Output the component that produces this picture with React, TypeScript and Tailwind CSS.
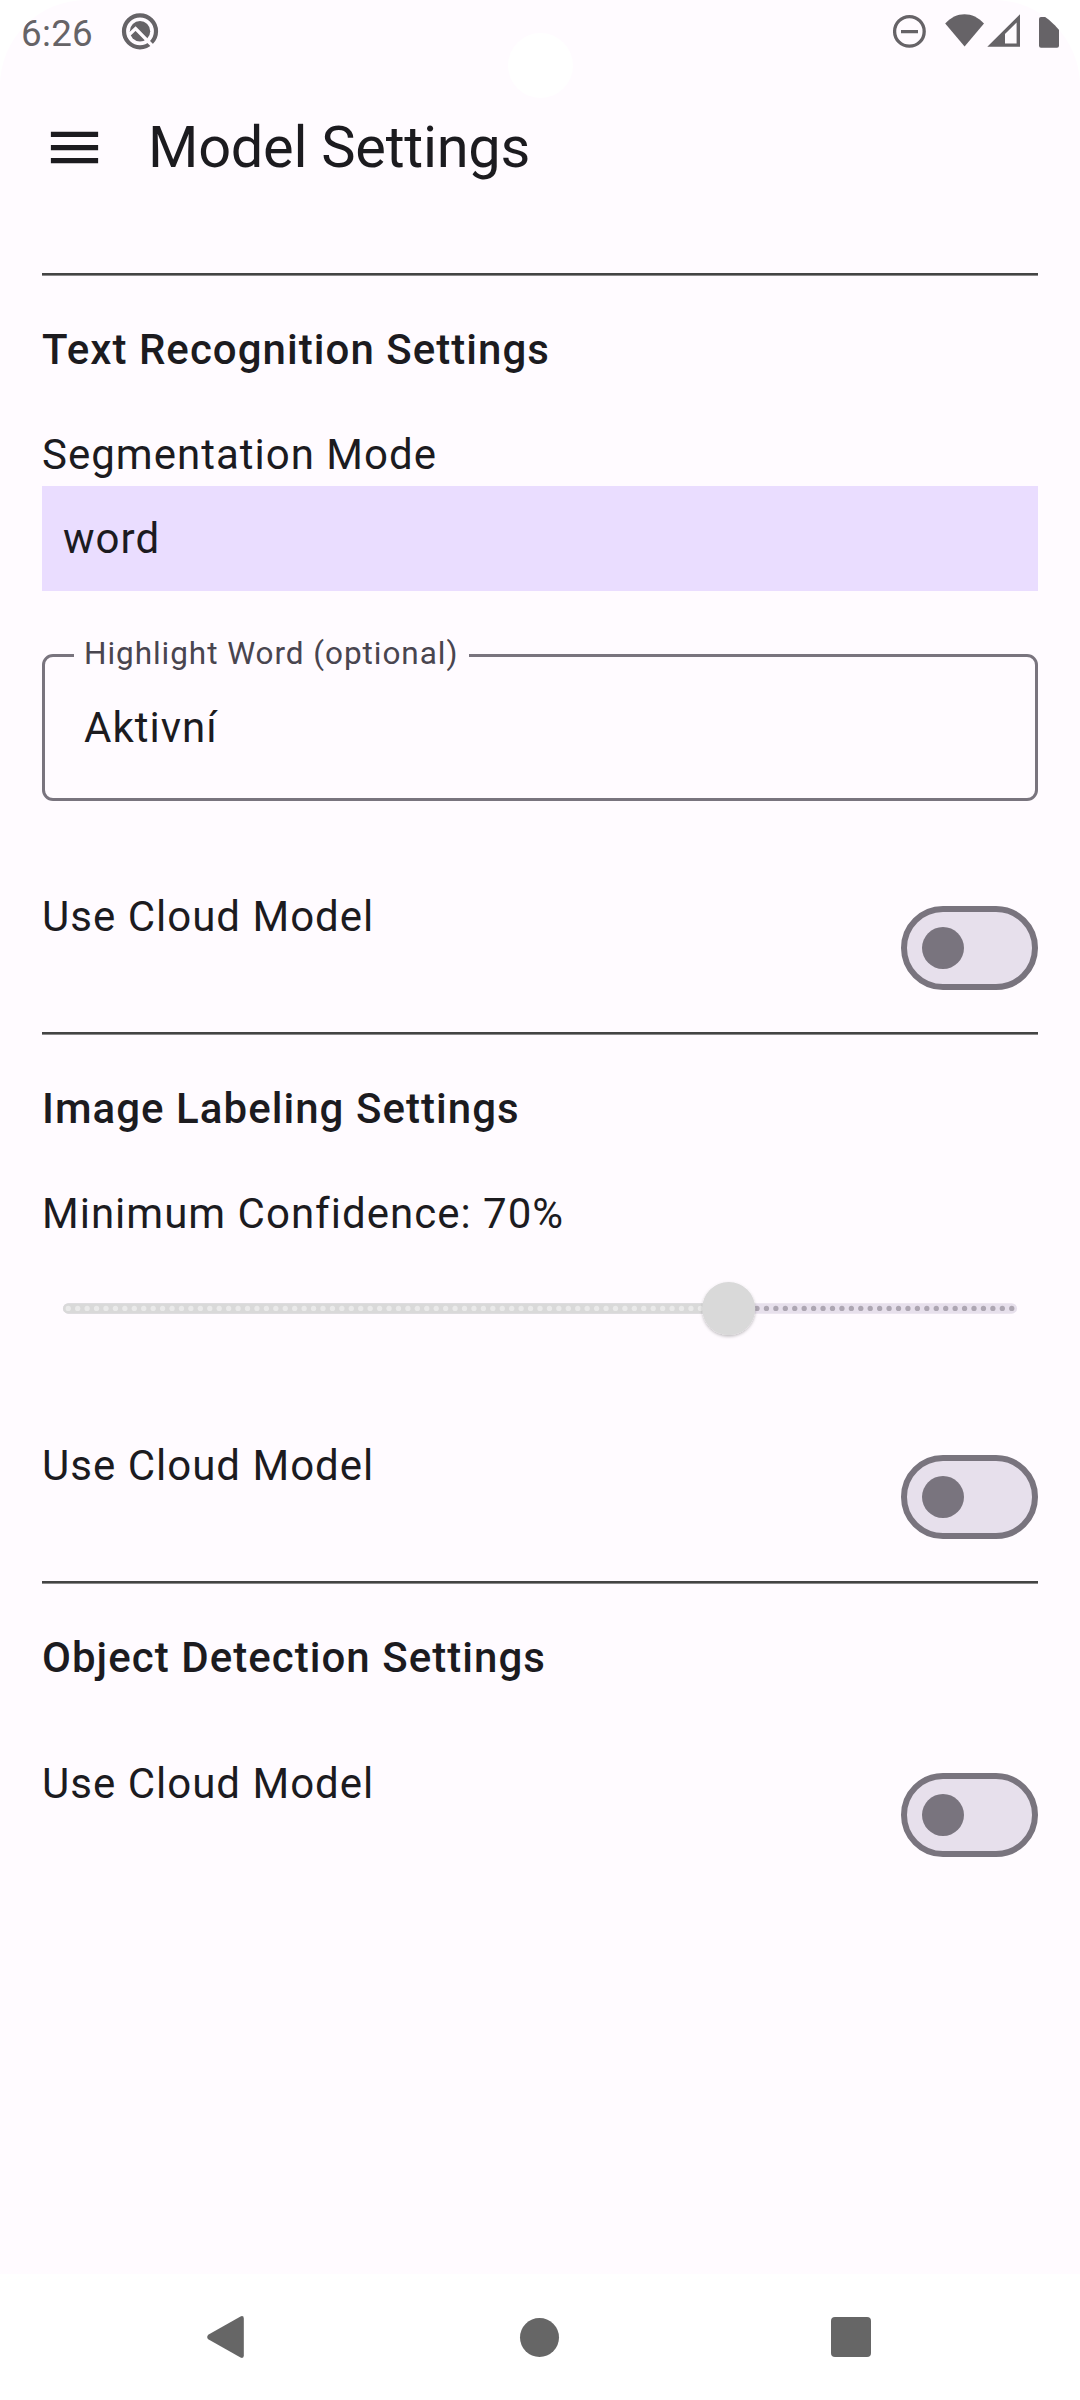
import React from "react";

function StatusBar() {
  return (
    <div className="relative flex h-[63px] shrink-0 items-start justify-between text-[#666367]">
      <div className="flex items-start pl-[21px]">
        <span className="mt-[12px] w-[100px] text-[36.75px] leading-[43px] tracking-[0.3px]">6:26</span>
        <svg className="mt-[12px] h-[39px] w-[39px]" viewBox="0 0 39 39" fill="none">
          <circle cx="19" cy="19.3" r="16" stroke="currentColor" strokeWidth="4.2" />
          <circle cx="19" cy="19.3" r="10.2" fill="currentColor" />
          <path d="M7 23.8L14.6 16.6L34 36.4" stroke="#fffbff" strokeWidth="3.4" />
        </svg>
      </div>
      <svg className="h-[63px] w-[200px]" viewBox="880 0 200 63" fill="none">
        <circle cx="909.4" cy="31.4" r="14.8" stroke="currentColor" strokeWidth="3.3" />
        <path d="M901 30h17v3.3h-17z" fill="currentColor" />
        <path d="M945.2 23.5C956 11 973 11 984 23.5L964.6 46.6Z" fill="currentColor" />
        <path fillRule="evenodd" d="M987.3 46.8L1020 14.3V46.8ZM1005 43.4H1016.6V22.5L1005 34Z" fill="currentColor" />
        <path d="M1041 17h16a2 2 0 0 1 2 2v26.7a2 2 0 0 1-2 2h-16a2 2 0 0 1-2-2V19a2 2 0 0 1 2-2z" fill="currentColor" />
      </svg>
      <div className="absolute left-[508px] top-[33px] h-[65px] w-[65px] rounded-full bg-white" />
    </div>
  );
}

function AppBar() {
  return (
    <header className="flex h-[168px] shrink-0 items-center pl-[43px]">
      <svg className="h-[63px] w-[63px]" viewBox="0 0 24 24" fill="currentColor">
        <path d="M3 18h18v-2H3v2zm0-5h18v-2H3v2zm0-7v2h18V6H3z" />
      </svg>
      <h1 className="ml-[42px] mt-[2px] text-[57.75px] leading-[73.5px] tracking-[-0.27px]">Model Settings</h1>
    </header>
  );
}

function Divider() {
  return <div className="h-[3px] border-b border-[#8a898a] bg-[#444444]" />;
}

function Heading({ children }: { children: React.ReactNode }) {
  return <h2 className="mt-[42px] font-medium tracking-[1.04px]">{children}</h2>;
}

function CloudSwitch() {
  return (
    <div className="mb-[42px] flex items-start justify-between">
      <span>Use Cloud Model</span>
      <button
        role="switch"
        aria-checked="false"
        aria-label="Use Cloud Model"
        className="mt-[21px] flex h-[84px] w-[137px] items-center rounded-full border-[6px] border-[#79747e] bg-[#e7e0ec] pl-[15px]"
      >
        <span className="h-[42px] w-[42px] rounded-full bg-[#79747e]" />
      </button>
    </div>
  );
}

const TICKS = Array.from({ length: 101 }, (_, i) => i);

function Slider({ value }: { value: number }) {
  const x = (n: number) => 26.25 + n * 9.435;
  return (
    <svg className="block h-[126px] w-full overflow-visible" viewBox="0 0 996 126">
      <defs>
        <filter id="thumbShadow" x="-30%" y="-30%" width="160%" height="160%">
          <feDropShadow dx="0" dy="1.6" stdDeviation="1.4" floodColor="#000000" floodOpacity="0.25" />
        </filter>
      </defs>
      <path d="M26.25 63.4H969.8" stroke="#e7e0ec" strokeWidth="10.5" strokeLinecap="round" />
      <path d={`M26.25 63.4H${x(value)}`} stroke="#d9d9d9" strokeWidth="10.5" strokeLinecap="round" />
      {TICKS.map((n) => (
        <circle key={n} cx={x(n)} cy="63.4" r="2.63" fill={n <= value ? "#eaeaea" : "#ada6b2"} />
      ))}
      <circle cx={x(value)} cy="63.6" r="26.5" fill="#d9d9d9" filter="url(#thumbShadow)" />
    </svg>
  );
}

function NavBar() {
  return (
    <nav className="flex h-[126px] shrink-0 items-center justify-between bg-white pl-[207px] pr-[209px] text-[#666666]">
      <svg className="h-[42px] w-[37px]" viewBox="0 0 37 42" fill="currentColor">
        <path d="M1.2 18.7L33.5.4Q36.8-.8 36.8 2.5V39.5Q36.8 42.8 33.5 41.6L1.2 23.3Q-.8 21 1.2 18.7Z" />
      </svg>
      <span className="ml-[4px] h-[39px] w-[39px] rounded-full bg-[#666666]" />
      <span className="h-[40px] w-[40px] rounded-[4px] bg-[#666666]" />
    </nav>
  );
}

export default function App() {
  return (
    <div className="h-[2400px] w-[1080px] overflow-hidden bg-white">
      <div className="flex h-full flex-col overflow-hidden rounded-t-[86px] bg-[#fffbff] font-['Roboto',sans-serif] text-[#1c1b1f]">
        <StatusBar />
        <AppBar />
        <main className="flex-1 px-[42px] pt-[42px] text-[42px] leading-[63px] tracking-[1.01px]">
          <Divider />
          <section>
            <Heading>Text Recognition Settings</Heading>
            <p className="mt-[42px]">Segmentation Mode</p>
            <div className="bg-[#eaddff] p-[21px]">word</div>
            <div className="relative mb-[84px] mt-[63px] h-[147px] rounded-[11px] border-[3px] border-[#79747e] pl-[39px] pt-[39px]">
              <label className="absolute left-[29px] top-[-24px] w-[395px] whitespace-nowrap bg-[#fffbff] pl-[10px] text-[31.5px] leading-[42px] tracking-[0.95px] text-[#49454f]">
                Highlight Word (optional)
              </label>
              Aktivní
            </div>
            <CloudSwitch />
          </section>
          <Divider />
          <section>
            <Heading>Image Labeling Settings</Heading>
            <p className="mt-[42px]">Minimum Confidence: 70%</p>
            <div className="mb-[63px]">
              <Slider value={70} />
            </div>
            <CloudSwitch />
          </section>
          <Divider />
          <section>
            <Heading>Object Detection Settings</Heading>
            <div className="mt-[63px]">
              <CloudSwitch />
            </div>
          </section>
        </main>
        <NavBar />
      </div>
    </div>
  );
}
